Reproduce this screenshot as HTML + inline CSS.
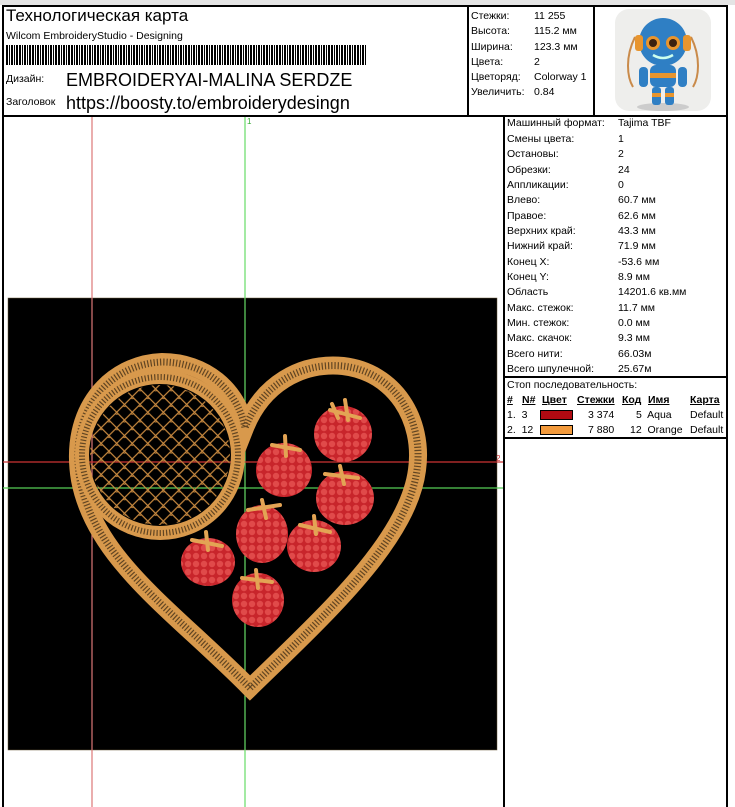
<!DOCTYPE html>
<html><head><meta charset="utf-8"><style>
*{margin:0;padding:0;box-sizing:border-box}
body{width:735px;height:807px;background:#fff;position:relative;overflow:hidden;font-family:"Liberation Sans",Arial,sans-serif;color:#000}
.a{position:absolute;white-space:nowrap}
.ln{position:absolute;background:#000}
.s{font-size:10.5px}
.r{position:absolute;left:507px;font-size:10.5px;white-space:nowrap}
.r b{font-weight:normal;position:absolute;left:111px}
</style></head><body>
<div class="a" style="left:0;top:0;width:735px;height:5px;background:#e4e4e4"></div>
<div class="ln" style="left:2px;top:5px;width:726px;height:2px"></div>
<div class="ln" style="left:2px;top:5px;width:1.5px;height:802px"></div>
<div class="ln" style="left:726px;top:5px;width:1.5px;height:802px"></div>
<div class="ln" style="left:2px;top:115px;width:726px;height:1.5px"></div>
<div class="ln" style="left:467px;top:5px;width:1.5px;height:111px"></div>
<div class="ln" style="left:593px;top:5px;width:1.5px;height:111px"></div>
<div class="ln" style="left:503px;top:115px;width:1.5px;height:692px"></div>
<div class="ln" style="left:503px;top:376px;width:224px;height:1.5px"></div>
<div class="ln" style="left:503px;top:437px;width:224px;height:1.5px"></div>

<div class="a" style="left:6px;top:6px;font-size:17px;font-weight:500">Технологическая карта</div>
<div class="a s" style="left:6px;top:30px">Wilcom EmbroideryStudio - Designing</div>
<div class="a" style="left:6px;top:45px;width:360px;height:20px;background:repeating-linear-gradient(90deg,#000 0 2px,#fff 2px 3px,#000 3px 4px,#fff 4px 5px,#000 5px 7px,#fff 7px 8px,#000 8px 9px,#fff 9px 10px,#000 10px 12px,#fff 12px 13px)"></div>
<div class="a s" style="left:6px;top:73px">Дизайн:</div>
<div class="a" style="left:66px;top:70px;font-size:18px">EMBROIDERYAI-MALINA SERDZE</div>
<div class="a s" style="left:6px;top:96px">Заголовок</div>
<div class="a" style="left:66px;top:93px;font-size:18px">https://boosty.to/embroiderydesingn</div>

<div class="a s" style="left:471px;top:9px;line-height:15.3px">Стежки:<br>Высота:<br>Ширина:<br>Цвета:<br>Цветоряд:<br>Увеличить:</div>
<div class="a s" style="left:534px;top:9px;line-height:15.3px">11 255<br>115.2 мм<br>123.3 мм<br>2<br>Colorway 1<br>0.84</div>

<svg class="a" style="left:595px;top:7px" width="131" height="107" viewBox="0 0 131 107">
<rect x="20" y="2" width="96" height="102" rx="14" fill="#eeeeec"/>
<ellipse cx="68" cy="100" rx="26" ry="4" fill="#ccc"/>
<path d="M40 30 C30 50 32 70 38 80 M96 30 C106 50 104 70 98 80" stroke="#c98a4a" stroke-width="2" fill="none"/>
<circle cx="68" cy="35" r="24" fill="#2f7fc4"/>
<rect x="40" y="28" width="8" height="16" rx="3" fill="#e8952e"/>
<rect x="88" y="28" width="8" height="16" rx="3" fill="#e8952e"/>
<circle cx="58" cy="36" r="7" fill="#e8952e"/><circle cx="58" cy="36" r="4" fill="#3a2010"/>
<circle cx="78" cy="36" r="7" fill="#e8952e"/><circle cx="78" cy="36" r="4" fill="#3a2010"/>
<path d="M58 48 Q68 54 78 48" stroke="#cfe" stroke-width="2.5" fill="none"/>
<rect x="55" y="58" width="26" height="22" rx="6" fill="#2f7fc4"/>
<rect x="55" y="66" width="26" height="5" fill="#e8952e"/>
<rect x="44" y="60" width="9" height="20" rx="4" fill="#2f7fc4"/>
<rect x="83" y="60" width="9" height="20" rx="4" fill="#2f7fc4"/>
<rect x="57" y="80" width="9" height="18" rx="3" fill="#2f7fc4"/>
<rect x="70" y="80" width="9" height="18" rx="3" fill="#2f7fc4"/>
<rect x="57" y="86" width="9" height="4" fill="#e8952e"/><rect x="70" y="86" width="9" height="4" fill="#e8952e"/>
</svg>

<div class="r" style="top:117px">Машинный формат:<b>Tajima TBF</b></div>
<div class="r" style="top:133px">Смены цвета:<b>1</b></div>
<div class="r" style="top:148px">Остановы:<b>2</b></div>
<div class="r" style="top:164px">Обрезки:<b>24</b></div>
<div class="r" style="top:179px">Аппликации:<b>0</b></div>
<div class="r" style="top:194px">Влево:<b>60.7 мм</b></div>
<div class="r" style="top:210px">Правое:<b>62.6 мм</b></div>
<div class="r" style="top:225px">Верхних край:<b>43.3 мм</b></div>
<div class="r" style="top:240px">Нижний край:<b>71.9 мм</b></div>
<div class="r" style="top:256px">Конец X:<b>-53.6 мм</b></div>
<div class="r" style="top:271px">Конец Y:<b>8.9 мм</b></div>
<div class="r" style="top:286px">Область<b>14201.6 кв.мм</b></div>
<div class="r" style="top:302px">Макс. стежок:<b>11.7 мм</b></div>
<div class="r" style="top:317px">Мин. стежок:<b>0.0 мм</b></div>
<div class="r" style="top:332px">Макс. скачок:<b>9.3 мм</b></div>
<div class="r" style="top:348px">Всего нити:<b>66.03м</b></div>
<div class="r" style="top:363px">Всего шпулечной:<b>25.67м</b></div>
<div class="r" style="top:379px">Стоп последовательность:</div>
<div class="a s" style="left:507px;top:394px;text-decoration:underline;font-weight:bold">#</div>
<div class="a s" style="left:522px;top:394px;text-decoration:underline;font-weight:bold">N#</div>
<div class="a s" style="left:542px;top:394px;text-decoration:underline;font-weight:bold">Цвет</div>
<div class="a s" style="left:577px;top:394px;text-decoration:underline;font-weight:bold">Стежки</div>
<div class="a s" style="left:622px;top:394px;text-decoration:underline;font-weight:bold">Код</div>
<div class="a s" style="left:648px;top:394px;text-decoration:underline;font-weight:bold">Имя</div>
<div class="a s" style="left:690px;top:394px;text-decoration:underline;font-weight:bold">Карта</div>
<div class="a s" style="left:507px;top:409px">1.&nbsp; 3</div>
<div class="a" style="left:540px;top:410px;width:33px;height:10px;background:#b00a12;border:1px solid #000"></div>
<div class="a s" style="left:588px;top:409px">3 374</div>
<div class="a s" style="left:636px;top:409px">5&nbsp; Aqua</div>
<div class="a s" style="left:690px;top:409px">Default</div>
<div class="a s" style="left:507px;top:424px">2.&nbsp; 12</div>
<div class="a" style="left:540px;top:425px;width:33px;height:10px;background:#f29a3c;border:1px solid #000"></div>
<div class="a s" style="left:588px;top:424px">7 880</div>
<div class="a s" style="left:630px;top:424px">12&nbsp; Orange</div>
<div class="a s" style="left:690px;top:424px">Default</div>

<svg class="a" style="left:0;top:0" width="503" height="807">
<defs>
<pattern id="m" width="11" height="11" patternUnits="userSpaceOnUse" patternTransform="rotate(45)">
<rect width="11" height="11" fill="none" stroke="#c98a40" stroke-width="1.2"/>
<circle cx="0" cy="0" r="2" fill="none" stroke="#c98a40" stroke-width="1"/>
</pattern>
<pattern id="rb" width="8" height="8" patternUnits="userSpaceOnUse">
<rect width="8" height="8" fill="#c8252b"/>
<circle cx="4" cy="4" r="3.2" fill="#e04a4a"/>
</pattern>
</defs>
<rect x="8" y="298" width="489" height="452" fill="#000" stroke="#6a5a3a" stroke-width="0.5"/>
<line x1="92" y1="117" x2="92" y2="807" stroke="#d77" stroke-width="1.2"/>
<line x1="245" y1="117" x2="245" y2="807" stroke="#6d6" stroke-width="1.2"/>
<line x1="3" y1="462" x2="503" y2="462" stroke="#c33" stroke-width="1.2"/>
<line x1="3" y1="488" x2="503" y2="488" stroke="#5c5" stroke-width="1.2"/>
<text x="247" y="124" font-size="8" fill="#3a3" font-family="Liberation Sans">1</text>
<text x="496" y="461" font-size="8" fill="#c33" font-family="Liberation Sans">2</text>
<path id="h" d="M250,688 C175,612 95,560 80,480 C68,410 110,364 162,362 C205,362 238,390 245,428 C262,385 300,362 343,366 C395,372 424,420 417,470 C408,540 325,615 250,688 Z" fill="none" stroke="#d8994c" stroke-width="18"/>
<path d="M250,688 C175,612 95,560 80,480 C68,410 110,364 162,362 C205,362 238,390 245,428 C262,385 300,362 343,366 C395,372 424,420 417,470 C408,540 325,615 250,688 Z" fill="none" stroke="#000" stroke-width="7" stroke-dasharray="1.2 2" opacity="0.55"/>
<circle cx="160" cy="455" r="70" fill="url(#m)"/>
<circle cx="160" cy="455" r="78" fill="none" stroke="#d8994c" stroke-width="14"/>
<circle cx="160" cy="455" r="78" fill="none" stroke="#000" stroke-width="6" stroke-dasharray="1.2 2" opacity="0.55"/>
<g fill="url(#rb)">
<ellipse cx="343" cy="434" rx="29" ry="28"/>
<ellipse cx="284" cy="470" rx="28" ry="27"/>
<ellipse cx="345" cy="498" rx="29" ry="27"/>
<ellipse cx="262" cy="534" rx="26" ry="29"/>
<ellipse cx="314" cy="546" rx="27" ry="26"/>
<ellipse cx="208" cy="562" rx="27" ry="24"/>
<ellipse cx="258" cy="600" rx="26" ry="27"/>
</g>
<g stroke="#e3a454" stroke-width="4" stroke-linecap="round" fill="none">
<path d="M330 410 L360 418 M345 400 L348 420 M338 418 L332 404"/>
<path d="M272 445 L300 450 M285 436 L286 456"/>
<path d="M325 474 L358 478 M340 466 L344 484"/>
<path d="M248 510 L280 505 M262 500 L266 518"/>
<path d="M300 525 L330 532 M314 516 L316 534"/>
<path d="M192 540 L222 546 M206 532 L208 550"/>
<path d="M242 578 L272 582 M256 570 L258 588"/>
</g>
</svg>
</body></html>
